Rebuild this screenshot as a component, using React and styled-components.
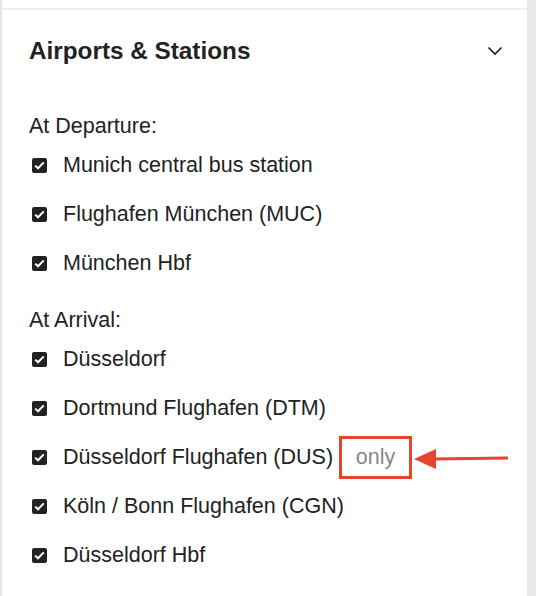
import React from "react";
import styled, { createGlobalStyle } from "styled-components";

const GlobalStyle = createGlobalStyle`
  html, body {
    margin: 0;
    padding: 0;
    background: #fff;
  }
  body {
    font-family: "Liberation Sans", Arial, Helvetica, sans-serif;
    color: #222;
  }
`;

const Page = styled.div`
  display: flex;
  width: 536px;
  height: 596px;
  overflow: hidden;
`;

const Panel = styled.div`
  flex: 1;
  border-left: 2px solid #e6e6e6;
  padding-top: 8px;
`;

const Gutter = styled.div`
  width: 9px;
  background: #e9e9e9;
`;

const Section = styled.section`
  border-top: 2px solid #efefef;
`;

const Header = styled.div`
  height: 81px;
  display: flex;
  align-items: center;
  justify-content: space-between;
  padding: 0 24px 0 27px;
`;

const Title = styled.h2`
  margin: 0;
  font-size: 24.3px;
  font-weight: 700;
  color: #222;
`;

const Chevron = styled.button`
  border: 0;
  background: none;
  padding: 0;
  display: flex;
  cursor: pointer;
`;

const Body = styled.div`
  padding: 20px 0 0 27px;
`;

const GroupLabel = styled.div`
  height: 30px;
  display: flex;
  align-items: center;
  font-size: 21.5px;
  color: #222;
  margin-top: ${(p) => (p.$first ? "0" : "17px")};
`;

const Row = styled.label`
  height: 49px;
  display: flex;
  align-items: center;
  padding-left: 3px;
  font-size: 21.5px;
  color: #222;
`;

const Box = styled.span`
  width: 15px;
  height: 15px;
  border-radius: 2px;
  background: #222;
  display: flex;
  align-items: center;
  justify-content: center;
  margin-right: 16px;
  flex-shrink: 0;
`;

const Only = styled.span`
  position: relative;
  margin-left: 6px;
  width: 67px;
  height: 37px;
  border: 3px solid #e8442c;
  display: flex;
  align-items: center;
  justify-content: center;
  color: #888;
  font-size: 21.5px;
`;

const Arrow = styled.svg`
  position: absolute;
  left: calc(100% + 4px);
  top: 8px;
`;

const Check = () => (
  <Box>
    <svg width="11" height="9" viewBox="0 0 11 9">
      <path d="M1.2 4.6 L4 7.3 L9.8 1.4" fill="none" stroke="#fff" strokeWidth="2" />
    </svg>
  </Box>
);

const departure = ["Munich central bus station", "Flughafen München (MUC)", "München Hbf"];
const arrival = [
  "Düsseldorf",
  "Dortmund Flughafen (DTM)",
  "Düsseldorf Flughafen (DUS)",
  "Köln / Bonn Flughafen (CGN)",
  "Düsseldorf Hbf",
];

export default function App() {
  return (
    <Page>
      <GlobalStyle />
      <Panel>
        <Section>
          <Header>
            <Title>Airports &amp; Stations</Title>
            <Chevron aria-label="collapse">
              <svg width="16" height="10" viewBox="0 0 16 10">
                <path d="M1.5 1.5 L8 8 L14.5 1.5" fill="none" stroke="#222" strokeWidth="1.7" />
              </svg>
            </Chevron>
          </Header>
          <Body>
            <GroupLabel $first>At Departure:</GroupLabel>
            {departure.map((name) => (
              <Row key={name}>
                <Check />
                {name}
              </Row>
            ))}
            <GroupLabel>At Arrival:</GroupLabel>
            {arrival.map((name) => (
              <Row key={name}>
                <Check />
                {name}
                {name === "Düsseldorf Flughafen (DUS)" && (
                  <Only>
                    only
                    <Arrow width="96" height="24" viewBox="0 0 96 24">
                      <path d="M20 12 L95 11" stroke="#e8442c" strokeWidth="3" />
                      <path d="M1 12 L23 2 L23 22 Z" fill="#e8442c" />
                    </Arrow>
                  </Only>
                )}
              </Row>
            ))}
          </Body>
        </Section>
      </Panel>
      <Gutter />
    </Page>
  );
}
